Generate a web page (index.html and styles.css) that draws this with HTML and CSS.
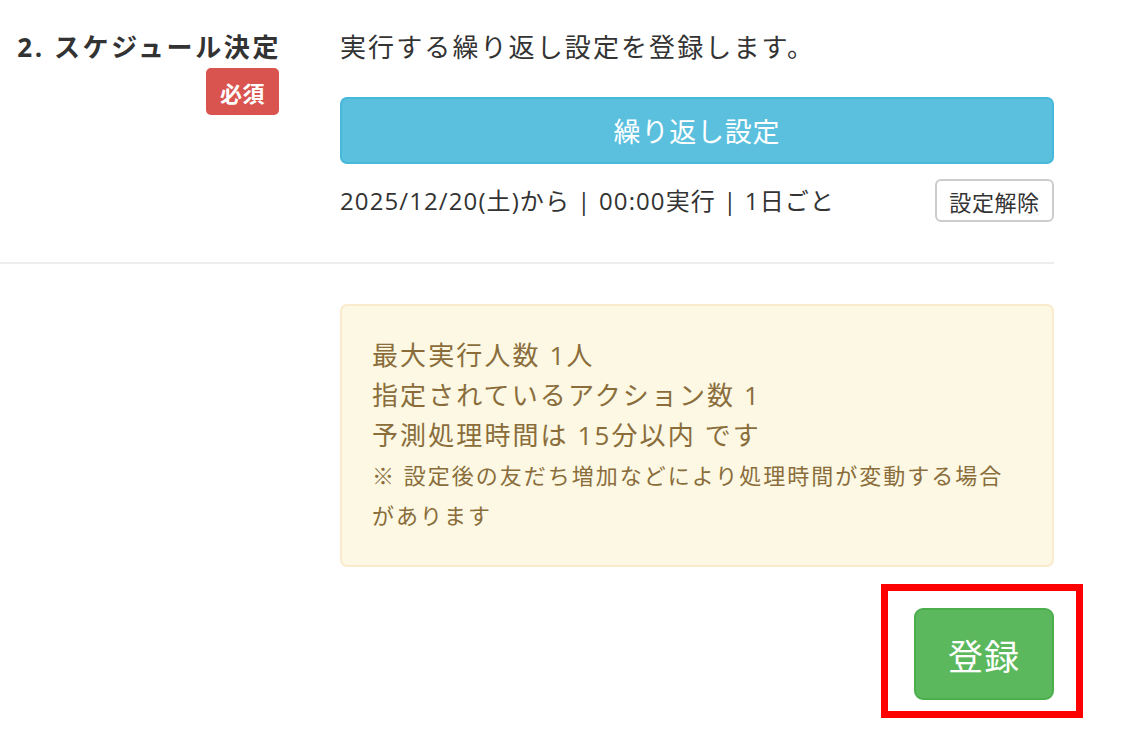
FILE: index.html
```html
<!DOCTYPE html>
<html lang="ja">
<head>
<meta charset="utf-8">
<title>スケジュール決定</title>
<link rel="stylesheet" href="styles.css">
</head>
<body>
<div class="page">
  <div class="form-row">
    <div class="label-col">
      <div class="label-title">2. スケジュール決定</div>
      <span class="badge-required">必須</span>
    </div>
    <div class="content-col">
      <p class="desc">実行する繰り返し設定を登録します。</p>
      <button class="btn-info" type="button">繰り返し設定</button>
      <div class="schedule-row">
        <span class="schedule-text">2025/12/20(土)から | 00:00実行 | 1日ごと</span>
        <button class="btn-default" type="button">設定解除</button>
      </div>
    </div>
  </div>
  <hr class="divider">
  <div class="footer-row">
    <div class="alert-warning">
      <div class="alert-line">最大実行人数 1人</div>
      <div class="alert-line">指定されているアクション数 1</div>
      <div class="alert-line">予測処理時間は 15分以内 です</div>
      <div class="alert-note">※ 設定後の友だち増加などにより処理時間が変動する場合があります</div>
    </div>
    <div class="submit-row">
      <div class="submit-wrap">
        <button class="btn-success" type="button">登録</button>
        <span class="highlight-box"></span>
      </div>
    </div>
  </div>
</div>
</body>
</html>
```

FILE: styles.css
```css
html, body {
  margin: 0;
  padding: 0;
  background: #ffffff;
}

body {
  font-family: "Open Sans", "Noto Sans CJK JP", sans-serif;
  color: #333333;
  width: 1142px;
  height: 750px;
  overflow: hidden;
}

.page {
  width: 1054px;
}

.form-row {
  display: flex;
  gap: 61px;
  padding-top: 27px;
}

.label-col {
  width: 279px;
  display: flex;
  flex-direction: column;
  align-items: flex-end;
}

.label-title {
  font-size: 26px;
  font-weight: bold;
  line-height: 40px;
  letter-spacing: 2.6px;
  margin-right: -2px;
}

.badge-required {
  display: inline-flex;
  align-items: center;
  justify-content: center;
  width: 73px;
  height: 47px;
  margin-top: 1px;
  box-sizing: border-box;
  background: #d9534f;
  color: #ffffff;
  font-weight: bold;
  font-size: 22px;
  letter-spacing: 0.5px;
  border-radius: 5px;
}

.content-col {
  width: 714px;
  display: flex;
  flex-direction: column;
}

.desc {
  margin: 0;
  font-size: 26px;
  line-height: 40px;
  letter-spacing: 2.1px;
}

.btn-info {
  margin-top: 30px;
  height: 67px;
  width: 714px;
  box-sizing: border-box;
  background: #5bc0de;
  border: 2px solid #46b8da;
  border-radius: 7px;
  color: #ffffff;
  font-family: inherit;
  font-size: 27px;
  padding: 0;
  letter-spacing: 0.8px;
}

.schedule-row {
  margin-top: 15px;
  display: flex;
  justify-content: space-between;
  align-items: center;
}

.schedule-text {
  font-size: 24px;
  line-height: 40px;
  letter-spacing: 1.1px;
}

.btn-default {
  width: 119px;
  height: 43px;
  box-sizing: border-box;
  background: #ffffff;
  border: 2px solid #cccccc;
  border-radius: 6px;
  color: #333333;
  font-family: inherit;
  font-size: 22px;
  letter-spacing: 0.6px;
  padding: 0;
}

.divider {
  margin: 40px 0 0 0;
  border: 0;
  border-top: 2px solid #eeeeee;
  height: 0;
}

.footer-row {
  margin-left: 340px;
  width: 714px;
  padding-top: 40px;
}

.alert-warning {
  box-sizing: border-box;
  height: 263px;
  background: #fcf8e3;
  border: 2px solid #faebcc;
  border-radius: 7px;
  color: #8a6d3b;
  padding: 29px 30px;
}

.alert-line {
  font-size: 26px;
  line-height: 40px;
  letter-spacing: 2.1px;
}

.alert-note {
  font-size: 22px;
  line-height: 40px;
  letter-spacing: 2px;
}

.submit-row {
  display: flex;
  justify-content: flex-end;
  margin-top: 41px;
}

.submit-wrap {
  position: relative;
}

.btn-success {
  display: block;
  width: 140px;
  height: 92px;
  box-sizing: border-box;
  background: #5cb85c;
  border: 2px solid #4cae4c;
  border-radius: 9px;
  color: #ffffff;
  font-family: inherit;
  font-size: 35px;
  padding: 0;
  letter-spacing: 1px;
}

.highlight-box {
  position: absolute;
  left: -33px;
  top: -24px;
  right: -29px;
  bottom: -18px;
  border: 7px solid #ff0000;
  pointer-events: none;
}
```
